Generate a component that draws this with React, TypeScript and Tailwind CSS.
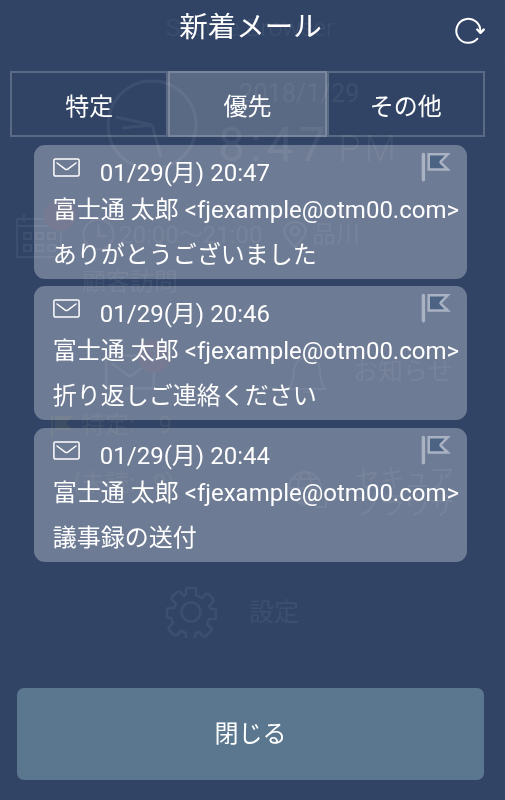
import type { ReactNode } from "react";
import clsx from "clsx";

const TABS = ["特定", "優先", "その他"];

const MAILS = [
  { id: 1, date: "01/29(月) 20:47", from: "富士通 太郎 <fjexample@otm00.com>", subject: "ありがとうございました" },
  { id: 2, date: "01/29(月) 20:46", from: "富士通 太郎 <fjexample@otm00.com>", subject: "折り返しご連絡ください" },
  { id: 3, date: "01/29(月) 20:44", from: "富士通 太郎 <fjexample@otm00.com>", subject: "議事録の送付" },
];

function MailIcon({ className }: { className?: string }) {
  return (
    <svg className={className} viewBox="0 0 27 19" fill="none" stroke="currentColor" strokeWidth="1.5">
      <rect x="0.9" y="0.9" width="25.2" height="17.2" rx="1.5" />
      <path d="M4 5l8.2 6.1q1.3.9 2.6 0L23 5" strokeLinecap="round" />
    </svg>
  );
}

function FlagIcon() {
  return (
    <svg className="h-[30px] w-[30px]" viewBox="0 0 30 30" fill="none">
      <path d="M2.4 2.4v25.4" stroke="#a9b2c3" strokeWidth="3.4" strokeLinecap="round" />
      <path d="M7.7 2.3h19l-6.8 7q-.7.8 0 1.6l6.8 6.6h-19z" fill="#4d6383" stroke="#a9b2c3" strokeWidth="2.6" />
    </svg>
  );
}

function RefreshIcon() {
  return (
    <svg className="h-[30px] w-[32px]" viewBox="0 0 32 30" fill="none" stroke="white" strokeWidth="2" strokeLinecap="round">
      <path d="M27.3 15.5A12 12 0 1 0 24.4 22.7" />
      <path d="M24.3 13.5l3.2 3.3 3.2-3.2" strokeWidth="2.4" strokeLinejoin="round" />
    </svg>
  );
}

function Badge({ children }: { children?: ReactNode }) {
  return (
    <span className="absolute -top-[14px] -right-[14px] flex size-8 items-center justify-center rounded-full bg-[#ff3030] text-lg">
      {children}
    </span>
  );
}

// Home screen, barely visible behind the dialog
function HomeScreen() {
  return (
    <div aria-hidden className="flex h-[800px] flex-col overflow-hidden text-white opacity-[0.06]">
      <div className="h-[57px] pt-[10px] pr-[5px] text-center text-[24.5px] leading-9 font-light">Secure Browser</div>

      <div className="flex h-[146px] border-t border-white/30 pt-[20px] pl-[105px]">
        <svg className="size-[94px]" viewBox="0 0 94 94" fill="none" stroke="white" strokeWidth="3">
          <circle cx="47" cy="47" r="44" />
          <path d="M11 39l36 8M17 50l30-3M47 47l9 32" />
        </svg>
        <div className="ml-[19px]">
          <div className="pl-[21px] text-[25.3px] leading-8">2018/1/29</div>
          <div className="flex items-baseline leading-[70px] font-normal">
            <span className="text-[48px] tracking-[5px]">8:47</span>
            <span className="ml-2 text-[36px] font-light tracking-[4px]">PM</span>
          </div>
        </div>
      </div>

      <div className="flex h-[137px] pt-[10px] pl-[16px]">
        <div className="relative h-[46px] w-[46px]">
          <svg className="size-[46px]" viewBox="0 0 46 46" fill="none" stroke="white" strokeWidth="2">
            <path d="M1 6h44v38H1zM1 13h44M8 1v8M38 1v8" />
            <path d="M8 20h7v6H8zM20 20h7v6h-7zM32 20h7v6h-7zM8 32h7v6H8zM20 32h7v6h-7zM32 32h7v6h-7z" />
          </svg>
          <Badge />
        </div>
        <div className="ml-[20px]">
          <div className="flex h-[43px] items-center">
            <svg className="size-[33px]" viewBox="0 0 33 33" fill="none" stroke="white" strokeWidth="2.5">
              <circle cx="16.5" cy="16.5" r="15" />
              <path d="M16.5 7v11h8" />
            </svg>
            <span className="ml-1 w-[163px] text-2xl whitespace-nowrap">20:00〜21:00</span>
            <svg className="h-[28px] w-[26px]" viewBox="0 0 26 28" fill="none" stroke="white" strokeWidth="2.5">
              <path d="M13 26C5 18 2 14 2 10a11 9 0 0 1 22 0c0 4-3 8-11 16z" />
              <circle cx="13" cy="10" r="4" />
            </svg>
            <span className="ml-1 text-2xl">品川</span>
          </div>
          <div className="mt-[6px] text-2xl leading-10">顧客訪問</div>
        </div>
      </div>

      <div className="flex h-[65px] pt-[14px] pl-[104px]">
        <div className="relative h-[36px] w-[52px]">
          <MailIcon className="h-[36px] w-[52px]" />
          <Badge>1</Badge>
        </div>
        <svg className="ml-[130px] size-[42px]" viewBox="0 0 42 42" fill="none" stroke="white" strokeWidth="2">
          <path d="M3 35c5-6 4-12 5-19C9 8 14 4 21 4s12 4 13 12c1 7 0 13 5 19zM17 38h8" />
        </svg>
        <span className="ml-[25px] text-[25px] leading-9">お知らせ</span>
      </div>

      <div className="flex h-[157px] pl-[51px]">
        <div className="w-[235px] text-2xl text-[#ffe9a0]">
          <div className="flex h-[40px] items-center">
            <svg className="size-[22px]" viewBox="0 0 22 22" fill="#ffd84a">
              <path d="M0 2h2v20H0zM4 2h18l-7 7 7 7H4z" />
            </svg>
            <span className="ml-2 whitespace-pre">特定:    9</span>
          </div>
          <div className="pt-[20px] pl-[22px] leading-9 whitespace-pre">(未読:   9)</div>
        </div>
        <svg className="mt-[64px] size-[42px]" viewBox="0 0 42 42" fill="none" stroke="white" strokeWidth="2">
          <circle cx="19" cy="19" r="16" />
          <ellipse cx="19" cy="19" rx="7" ry="16" />
          <path d="M3 19h32M6 10h26M6 28h26M30 38h10v-8" />
        </svg>
        <div className="mt-[60px] ml-[27px] text-[25px] leading-[27px]">
          <div>セキュア</div>
          <div>ブラウザ</div>
        </div>
      </div>

      <div className="flex pt-[24px] pl-[165px]">
        <svg className="size-[52px]" viewBox="0 0 52 52" fill="none" stroke="white" strokeWidth="2.6" strokeLinejoin="round">
          <path d="M22 2h8q1 0 1 2v5l6 3 4-4q1-1 3 0l4 5q1 1 0 3l-4 4 2 3h3q2 0 2 2v6q0 2-2 2h-5l-2 5 4 4q1 1 0 3l-5 5q-1 1-3 0l-4-4-4 2v4q0 2-2 2h-5q-2 0-2-2v-5l-5-2-4 4q-1 1-3 0l-5-5q-1-1 0-3l4-4-2-5H4q-2 0-2-2v-6q0-2 2-2h5l2-4-4-4q-1-1 0-3l5-5q1-1 3 0l4 4 2-2V4q0-2 1-2z" />
          <circle cx="26" cy="26" r="9.5" />
        </svg>
        <span className="ml-[32px] text-[25px] leading-[54px]">設定</span>
      </div>
    </div>
  );
}

function MailCard({ mail }: { mail: (typeof MAILS)[number] }) {
  return (
    <li className="relative h-[134px] rounded-[11px] bg-[#fcfbff]/30 pt-[10px] pl-[18.8px] text-2xl leading-9 whitespace-nowrap">
      <div className="flex">
        <MailIcon className="mt-[3px] mr-[20px] h-[19px] w-[27px]" />
        <span>{mail.date}</span>
      </div>
      <div className="mt-px">{mail.from}</div>
      <div className="mt-[9px]">{mail.subject}</div>
      <div className="absolute top-[7px] right-[16px]">
        <FlagIcon />
      </div>
    </li>
  );
}

export default function App() {
  const activeTab = "優先";

  return (
    <div className="relative h-[800px] w-[505px] overflow-hidden bg-[#314466] font-['Roboto','Noto_Sans_CJK_JP',sans-serif]">
      <HomeScreen />

      <div className="absolute inset-0 flex flex-col text-white">
        <header className="grid h-[71px] grid-cols-[48px_1fr_52px]">
          <h1 className="col-start-2 pt-[8px] text-center text-[28.5px] leading-10">新着メール</h1>
          <button aria-label="更新" className="mt-[16px] h-[30px]">
            <RefreshIcon />
          </button>
        </header>

        <div className="ml-[10px] grid h-[66px] w-[475px] grid-cols-3">
          {TABS.map((tab) => (
            <button
              key={tab}
              className={clsx(
                "border-2 border-white/20 pt-[5px] text-2xl",
                tab === activeTab && "bg-white/20"
              )}
            >
              {tab}
            </button>
          ))}
        </div>

        <ul className="mt-[7.8px] mr-[38px] ml-[34px] flex flex-col gap-[7.4px]">
          {MAILS.map((mail) => (
            <MailCard key={mail.id} mail={mail} />
          ))}
        </ul>

        <button className="mt-auto mr-[21px] mb-5 ml-[17px] h-[92px] rounded-[7px] bg-[#5a778f] text-2xl">
          閉じる
        </button>
      </div>
    </div>
  );
}
